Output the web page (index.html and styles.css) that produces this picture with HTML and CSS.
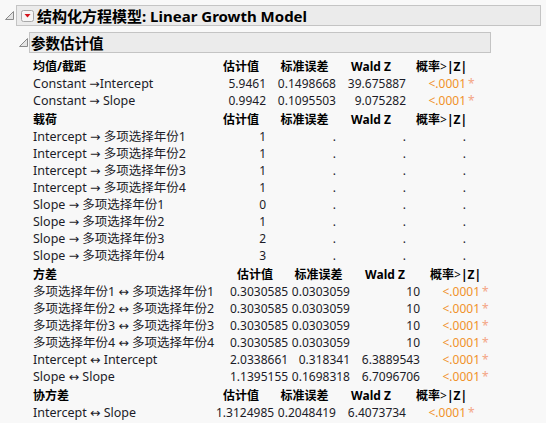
FILE: index.html
```html
<!DOCTYPE html>
<html lang="zh-CN">
<head>
<meta charset="utf-8">
<title>结构化方程模型</title>
<link rel="stylesheet" href="styles.css">
</head>
<body>
<div class="report">
  <div class="outline-row level1">
    <svg class="disclose" width="9" height="9" viewBox="0 0 9 9"><polygon points="8.5,0.5 8.5,8.5 0.5,8.5" fill="#e4e4e4" stroke="#8a8a8a" stroke-width="1"/></svg>
    <div class="outline-box title-box">
      <span class="menu-btn"><svg width="13" height="12" viewBox="0 0 13 12"><rect x="0.5" y="0.5" width="12" height="11" rx="2" ry="2" fill="#f6f6f6" stroke="#a8a8a8"/><polygon points="3.5,4 9.5,4 6.5,7.5" fill="#d4141c"/></svg></span>
      <span class="title">结构化方程模型: Linear Growth Model</span>
    </div>
  </div>
  <div class="outline-row level2">
    <svg class="disclose" width="9" height="9" viewBox="0 0 9 9"><polygon points="8.5,0.5 8.5,8.5 0.5,8.5" fill="#e4e4e4" stroke="#8a8a8a" stroke-width="1"/></svg>
    <div class="outline-box sub-box"><span class="subtitle">参数估计值</span></div>
  </div>

  <div class="tables">
    <div class="ptable narrow">
      <div class="hd lbl">均值/截距</div><div class="hd est">估计值</div><div class="hd se">标准误差</div><div class="hd wald">Wald Z</div><div class="hd prob">概率<span class="gt">&gt;</span>|Z|</div><div></div>
      <div class="lbl">Constant →Intercept</div><div class="num">5.9461</div><div class="num">0.1498668</div><div class="num">39.675887</div><div class="num sig">&lt;.0001</div><div class="star">*</div>
      <div class="lbl">Constant → Slope</div><div class="num">0.9942</div><div class="num">0.1095503</div><div class="num">9.075282</div><div class="num sig">&lt;.0001</div><div class="star">*</div>
    </div>

    <div class="ptable narrow">
      <div class="hd lbl">载荷</div><div class="hd est">估计值</div><div class="hd se">标准误差</div><div class="hd wald">Wald Z</div><div class="hd prob">概率<span class="gt">&gt;</span>|Z|</div><div></div>
      <div class="lbl">Intercept → 多项选择年份1</div><div class="num">1</div><div class="num">.</div><div class="num">.</div><div class="num">.</div><div></div>
      <div class="lbl">Intercept → 多项选择年份2</div><div class="num">1</div><div class="num">.</div><div class="num">.</div><div class="num">.</div><div></div>
      <div class="lbl">Intercept → 多项选择年份3</div><div class="num">1</div><div class="num">.</div><div class="num">.</div><div class="num">.</div><div></div>
      <div class="lbl">Intercept → 多项选择年份4</div><div class="num">1</div><div class="num">.</div><div class="num">.</div><div class="num">.</div><div></div>
      <div class="lbl">Slope → 多项选择年份1</div><div class="num">0</div><div class="num">.</div><div class="num">.</div><div class="num">.</div><div></div>
      <div class="lbl">Slope → 多项选择年份2</div><div class="num">1</div><div class="num">.</div><div class="num">.</div><div class="num">.</div><div></div>
      <div class="lbl">Slope → 多项选择年份3</div><div class="num">2</div><div class="num">.</div><div class="num">.</div><div class="num">.</div><div></div>
      <div class="lbl">Slope → 多项选择年份4</div><div class="num">3</div><div class="num">.</div><div class="num">.</div><div class="num">.</div><div></div>
    </div>

    <div class="ptable wide">
      <div class="hd lbl">方差</div><div class="hd est">估计值</div><div class="hd se">标准误差</div><div class="hd wald">Wald Z</div><div class="hd prob">概率<span class="gt">&gt;</span>|Z|</div><div></div>
      <div class="lbl">多项选择年份1 ↔ 多项选择年份1</div><div class="num">0.3030585</div><div class="num">0.0303059</div><div class="num">10</div><div class="num sig">&lt;.0001</div><div class="star">*</div>
      <div class="lbl">多项选择年份2 ↔ 多项选择年份2</div><div class="num">0.3030585</div><div class="num">0.0303059</div><div class="num">10</div><div class="num sig">&lt;.0001</div><div class="star">*</div>
      <div class="lbl">多项选择年份3 ↔ 多项选择年份3</div><div class="num">0.3030585</div><div class="num">0.0303059</div><div class="num">10</div><div class="num sig">&lt;.0001</div><div class="star">*</div>
      <div class="lbl">多项选择年份4 ↔ 多项选择年份4</div><div class="num">0.3030585</div><div class="num">0.0303059</div><div class="num">10</div><div class="num sig">&lt;.0001</div><div class="star">*</div>
      <div class="lbl">Intercept ↔ Intercept</div><div class="num">2.0338661</div><div class="num">0.318341</div><div class="num">6.3889543</div><div class="num sig">&lt;.0001</div><div class="star">*</div>
      <div class="lbl">Slope ↔ Slope</div><div class="num">1.1395155</div><div class="num">0.1698318</div><div class="num">6.7096706</div><div class="num sig">&lt;.0001</div><div class="star">*</div>
    </div>

    <div class="ptable narrow">
      <div class="hd lbl">协方差</div><div class="hd est">估计值</div><div class="hd se">标准误差</div><div class="hd wald">Wald Z</div><div class="hd prob">概率<span class="gt">&gt;</span>|Z|</div><div></div>
      <div class="lbl">Intercept ↔ Slope</div><div class="num">1.3124985</div><div class="num">0.2048419</div><div class="num">6.4073734</div><div class="num sig">&lt;.0001</div><div class="star">*</div>
    </div>
  </div>
</div>
</body>
</html>
```

FILE: styles.css
```css
html, body {
  margin: 0;
  padding: 0;
  background: #f8f8f8;
}

body {
  font-family: "Noto Sans", "DejaVu Sans", "Noto Sans CJK SC", sans-serif;
  font-size: 12px;
  color: #1c1c28;
}

.report {
  padding-top: 5px;
}

.outline-row {
  display: flex;
  align-items: center;
}

.level1 {
  padding-left: 5px;
}

.level1 .disclose {
  margin-right: 2px;
}

.level2 {
  margin-top: 6px;
  padding-left: 19px;
}

.level2 .disclose {
  margin-right: 1px;
}

.outline-box {
  box-sizing: border-box;
  height: 21px;
  border: 1px solid #c4c4c4;
  background: #ebebeb;
  display: flex;
  align-items: center;
}

.title-box {
  width: 525px;
  padding-left: 4px;
}

.menu-btn {
  display: flex;
  width: 13px;
  height: 12px;
  margin-right: 3px;
}

.title {
  font-family: "Noto Sans", "Noto Sans CJK SC", sans-serif;
  font-weight: bold;
  font-size: 15px;
  color: #000;
}

.sub-box {
  width: 462px;
  padding-left: 1px;
}

.subtitle {
  font-family: "Noto Sans CJK SC", sans-serif;
  font-weight: bold;
  font-size: 14.5px;
  color: #000;
}

.tables {
  margin-top: 5px;
  padding-left: 33px;
  display: flex;
  flex-direction: column;
  gap: 2px;
}

.ptable {
  display: grid;
  grid-auto-rows: 17px;
  line-height: 17px;
  white-space: nowrap;
}

.ptable.narrow {
  grid-template-columns: 183px 50px 70px 70px 60px 14px;
}

.ptable.wide {
  grid-template-columns: 197px 50px 70px 70px 60px 14px;
}

.lbl {
  font-size: 12.5px;
}

.hd {
  font-weight: bold;
  color: #000;
  text-align: center;
}

.hd.lbl {
  text-align: left;
  font-size: 12px;
}

.hd.se {
  padding-left: 7px;
}

.hd.prob {
  padding-left: 10px;
}

.gt {
  font-weight: normal;
}

.num {
  text-align: right;
}

.sig {
  color: #f0922a;
}

.star {
  color: #f4a585;
  padding-left: 2px;
}
```
